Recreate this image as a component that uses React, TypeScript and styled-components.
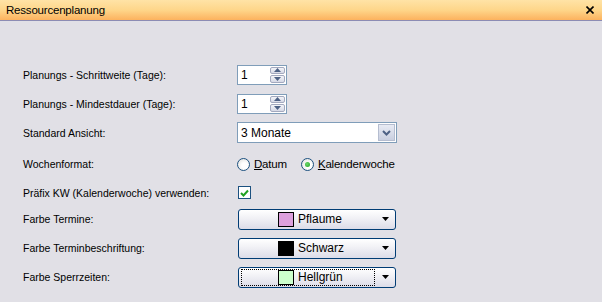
import React from "react";
import styled, { createGlobalStyle } from "styled-components";

const GlobalStyle = createGlobalStyle`
  html, body {
    margin: 0;
    padding: 0;
    background: #e1e0e6;
  }
  body {
    font-family: "Liberation Sans", Arial, sans-serif;
    font-size: 11px;
    color: #000;
  }
`;

const Window = styled.div`
  width: 602px;
  height: 302px;
  background: #e1e0e6;
  overflow: hidden;
  font-family: "Liberation Sans", Arial, sans-serif;
  font-size: 11px;
`;

const TitleBar = styled.div`
  height: 20px;
  display: flex;
  align-items: center;
  justify-content: space-between;
  padding: 0 8px 0 6px;
  background: linear-gradient(to bottom, #ffe3a6 0%, #fed68a 50%, #fcb25e 100%);
  border-bottom: 1px solid #8c8cb4;
  font-size: 11.5px;
  letter-spacing: -0.2px;
`;

const Form = styled.div`
  padding: 39px 0 0 23px;
  display: flex;
  flex-direction: column;
`;

type RowProps = { $h: number };
const Row = styled.div<RowProps>`
  height: ${(p) => p.$h}px;
  display: grid;
  grid-template-columns: 214px 1fr;
  align-items: center;
`;

const Label = styled.span`
  white-space: nowrap;
  font-size: 10.5px;
`;

const SpinBox = styled.div`
  width: 48px;
  height: 18px;
  border: 1px solid #7f9db9;
  background: #fff;
  display: flex;
  align-items: stretch;
`;

const SpinText = styled.span`
  flex: 1;
  padding-left: 3px;
  font-size: 12px;
  display: flex;
  align-items: center;
`;

const SpinButtons = styled.div`
  width: 15px;
  display: flex;
  flex-direction: column;
  padding: 1px 1px 1px 0;
  gap: 1px;
`;

const SpinBtn = styled.div`
  flex: 1;
  border: 1px solid #a3a9bf;
  border-radius: 2px;
  background: linear-gradient(to bottom, #f4f5f9, #d6d9e6);
  display: flex;
  align-items: center;
  justify-content: center;
`;

const Combo = styled.div`
  width: 158px;
  height: 19px;
  border: 1px solid #7f9db9;
  background: #fff;
  display: flex;
  align-items: stretch;
`;

const ComboText = styled.span`
  flex: 1;
  padding-left: 3px;
  font-size: 12px;
  display: flex;
  align-items: center;
`;

const ComboBtn = styled.div`
  width: 15px;
  margin: 1px;
  border: 1px solid #b5bdd0;
  background: linear-gradient(to bottom, #e8ebf4, #c9cfe0);
  display: flex;
  align-items: center;
  justify-content: center;
`;

const RadioGroup = styled.div`
  display: flex;
  align-items: center;
  gap: 14px;
`;

const RadioItem = styled.label`
  display: flex;
  align-items: center;
  gap: 4px;
  font-size: 11.5px;
  letter-spacing: -0.2px;
`;

const RadioCircle = styled.span<{ $on?: boolean }>`
  width: 11px;
  height: 11px;
  border-radius: 50%;
  border: 1px solid #1c5180;
  background: radial-gradient(circle at 60% 60%, #ffffff 30%, #dcdcd7 100%);
  display: flex;
  align-items: center;
  justify-content: center;
  &::after {
    content: "";
    display: ${(p) => (p.$on ? "block" : "none")};
    width: 5px;
    height: 5px;
    border-radius: 50%;
    background: radial-gradient(circle at 40% 40%, #6cd86c, #21a121);
  }
`;

const Accel = styled.span`
  text-decoration: underline;
`;

const CheckBox = styled.span`
  width: 11px;
  height: 11px;
  margin-left: 1px;
  border: 1px solid #1c5180;
  background: #fff;
  display: flex;
  align-items: center;
  justify-content: center;
`;

const ColorButton = styled.div`
  width: 156px;
  height: 19px;
  border: 1px solid #003c74;
  border-radius: 3px;
  margin-left: 1px;
  background: linear-gradient(to bottom, #ffffff 0%, #f2f2f6 40%, #dcdce8 100%);
  display: flex;
  align-items: center;
`;

const ColorBody = styled.div<{ $focus?: boolean }>`
  flex: 1;
  height: 15px;
  margin-left: 2px;
  display: flex;
  align-items: center;
  padding-left: 36px;
  gap: 4px;
  border: 1px dotted ${(p) => (p.$focus ? "#000" : "transparent")};
`;

const Swatch = styled.span<{ $c: string }>`
  width: 16px;
  height: 15px;
  border: 1px solid #000;
  background: ${(p) => p.$c};
  box-sizing: border-box;
`;

const SwatchText = styled.span`
  font-size: 12px;
`;

const Arrow = styled.span`
  width: 20px;
  display: flex;
  justify-content: center;
`;

const TinyArrow = ({ up }: { up?: boolean }) => (
  <svg width="7" height="4" viewBox="0 0 7 4">
    <path d={up ? "M0 4 L3.5 0 L7 4 Z" : "M0 0 L3.5 4 L7 0 Z"} fill="#4d6185" />
  </svg>
);

const Spinner = ({ value }: { value: string }) => (
  <SpinBox>
    <SpinText>{value}</SpinText>
    <SpinButtons>
      <SpinBtn>
        <TinyArrow up />
      </SpinBtn>
      <SpinBtn>
        <TinyArrow />
      </SpinBtn>
    </SpinButtons>
  </SpinBox>
);

const ColorPick = ({ color, name, focus }: { color: string; name: string; focus?: boolean }) => (
  <ColorButton>
    <ColorBody $focus={focus}>
      <Swatch $c={color} />
      <SwatchText>{name}</SwatchText>
    </ColorBody>
    <Arrow>
      <svg width="7" height="4" viewBox="0 0 7 4">
        <path d="M0 0 L3.5 4 L7 0 Z" fill="#000" />
      </svg>
    </Arrow>
  </ColorButton>
);

export default function App() {
  return (
    <Window>
      <GlobalStyle />
      <TitleBar>
        <span>Ressourcenplanung</span>
        <svg width="8" height="8" viewBox="0 0 8 8">
          <path d="M0.5 0.5 L7.5 7.5 M7.5 0.5 L0.5 7.5" stroke="#000" strokeWidth="1.6" />
        </svg>
      </TitleBar>
      <Form>
        <Row $h={29}>
          <Label>Planungs - Schrittweite (Tage):</Label>
          <Spinner value="1" />
        </Row>
        <Row $h={29}>
          <Label>Planungs - Mindestdauer (Tage):</Label>
          <Spinner value="1" />
        </Row>
        <Row $h={29}>
          <Label>Standard Ansicht:</Label>
          <Combo>
            <ComboText>3 Monate</ComboText>
            <ComboBtn>
              <svg width="9" height="6" viewBox="0 0 9 6">
                <path d="M1 1 L4.5 4.5 L8 1" stroke="#4d6185" strokeWidth="2" fill="none" />
              </svg>
            </ComboBtn>
          </Combo>
        </Row>
        <Row $h={34}>
          <Label>Wochenformat:</Label>
          <RadioGroup>
            <RadioItem>
              <RadioCircle />
              <span>
                <Accel>D</Accel>atum
              </span>
            </RadioItem>
            <RadioItem>
              <RadioCircle $on />
              <span>
                <Accel>K</Accel>alenderwoche
              </span>
            </RadioItem>
          </RadioGroup>
        </Row>
        <Row $h={23}>
          <Label>Präfix KW (Kalenderwoche) verwenden:</Label>
          <CheckBox>
            <svg width="9" height="8" viewBox="0 0 9 8">
              <path d="M1 4 L3.5 6.5 L8 1.5" stroke="#21a121" strokeWidth="2" fill="none" />
            </svg>
          </CheckBox>
        </Row>
        <Row $h={30}>
          <Label>Farbe Termine:</Label>
          <ColorPick color="#dda0dd" name="Pflaume" />
        </Row>
        <Row $h={28}>
          <Label>Farbe Terminbeschriftung:</Label>
          <ColorPick color="#000000" name="Schwarz" />
        </Row>
        <Row $h={30}>
          <Label>Farbe Sperrzeiten:</Label>
          <ColorPick color="#ccffcc" name="Hellgrün" focus />
        </Row>
      </Form>
    </Window>
  );
}
